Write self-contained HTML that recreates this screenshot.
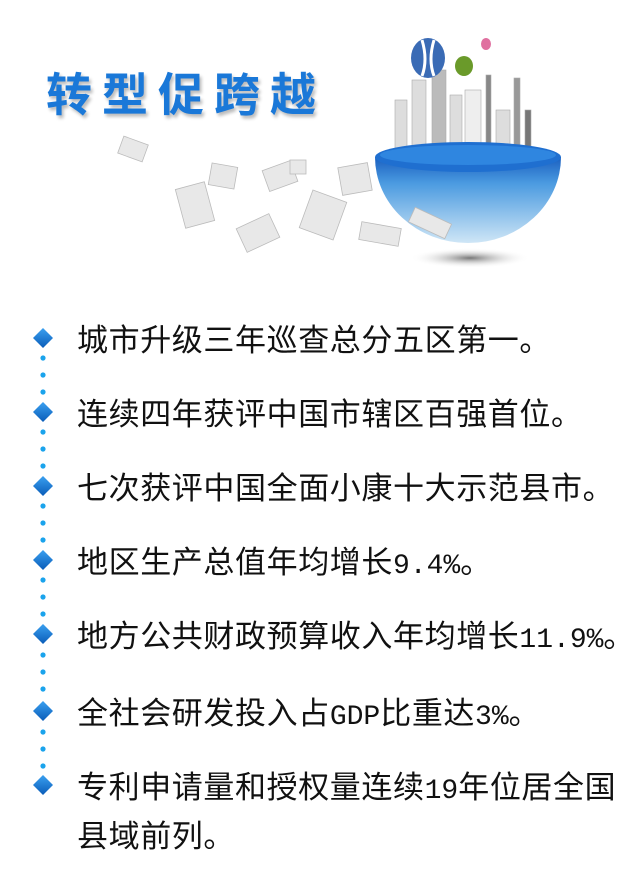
<!DOCTYPE html>
<html><head><meta charset="utf-8"><style>
html,body{margin:0;padding:0;background:#fff;width:640px;height:893px;overflow:hidden;position:relative}
.t{position:absolute;left:46px;top:62px;font:bold 46px "Noto Sans CJK SC",sans-serif;color:#1a78d8;letter-spacing:10px;text-shadow:2px 3px 3px #bbb;line-height:60px}
.r{position:absolute;left:77px;font:31px "Noto Sans CJK SC",sans-serif;color:#111;line-height:42px;white-space:nowrap;letter-spacing:0.6px}
.r span{font-family:"Liberation Mono",monospace;font-size:28px;letter-spacing:0}
</style></head><body>
<div class="t">转型促跨越</div>
<svg width="640" height="893" style="position:absolute;left:0;top:0">
<defs>
<linearGradient id="g" x1="0" y1="0" x2="0" y2="1"><stop offset="0" stop-color="#1a5fc0"/><stop offset=".3" stop-color="#4a9ae0"/><stop offset="1" stop-color="#cfe6f6"/></linearGradient>
<linearGradient id="d" x1="0" y1="0" x2="0" y2="1"><stop offset="0" stop-color="#3aa0f0"/><stop offset="1" stop-color="#0a5cb8"/></linearGradient>
<radialGradient id="sh"><stop offset="0" stop-color="#777"/><stop offset="1" stop-color="#fff" stop-opacity="0"/></radialGradient>
</defs>
<ellipse cx="470" cy="258" rx="60" ry="10" fill="url(#sh)"/>
<g fill="#ddd" stroke="#aaa" stroke-width="0.6">
<rect x="395" y="100" width="12" height="55"/><rect x="412" y="80" width="14" height="75"/><rect x="432" y="70" width="14" height="85" fill="#bbb"/><rect x="450" y="95" width="12" height="60"/><rect x="465" y="90" width="16" height="65" fill="#eee"/><rect x="486" y="75" width="5" height="80" fill="#888"/><rect x="496" y="110" width="14" height="45"/><rect x="514" y="78" width="6" height="77" fill="#999"/><rect x="525" y="110" width="6" height="45" fill="#777"/>
</g>
<path d="M375 157 A93 86 0 0 0 561 157 Z" fill="url(#g)"/>
<ellipse cx="468" cy="157" rx="93" ry="15" fill="#1f6fd0"/>
<ellipse cx="468" cy="155" rx="88" ry="10" fill="#2f86e0"/>
<ellipse cx="428" cy="58" rx="17" ry="20" fill="#3a6bb5"/><path d="M422 40 Q428 60 422 76 M434 40 Q428 60 434 76" stroke="#fff" stroke-width="3" fill="none"/>
<ellipse cx="464" cy="66" rx="9" ry="10" fill="#6a9a2a"/>
<ellipse cx="486" cy="44" rx="5" ry="6" fill="#e070a0"/>
<g fill="#e8e8e8" stroke="#bbb" stroke-width="0.8">
<rect x="120" y="140" width="26" height="18" transform="rotate(20 133 149)"/>
<rect x="180" y="185" width="30" height="40" transform="rotate(-15 195 205)"/>
<rect x="210" y="165" width="26" height="22" transform="rotate(10 223 176)"/>
<rect x="265" y="165" width="30" height="22" transform="rotate(-20 280 176)"/>
<rect x="240" y="220" width="36" height="26" transform="rotate(-25 258 233)"/>
<rect x="305" y="195" width="36" height="40" transform="rotate(20 323 215)"/>
<rect x="340" y="165" width="30" height="28" transform="rotate(-10 355 179)"/>
<rect x="360" y="225" width="40" height="18" transform="rotate(10 380 234)"/>
<rect x="410" y="215" width="40" height="16" transform="rotate(25 430 223)"/>
<rect x="290" y="160" width="16" height="14"/>
</g>
<g fill="#1aa3ec">
<circle cx="43" cy="358" r="2.6"/><circle cx="43" cy="375" r="2.6"/><circle cx="43" cy="392" r="2.6"/>
<circle cx="43" cy="432" r="2.6"/><circle cx="43" cy="449" r="2.6"/><circle cx="43" cy="466" r="2.6"/>
<circle cx="43" cy="506" r="2.6"/><circle cx="43" cy="523" r="2.6"/><circle cx="43" cy="540" r="2.6"/>
<circle cx="43" cy="580" r="2.6"/><circle cx="43" cy="597" r="2.6"/><circle cx="43" cy="614" r="2.6"/>
<circle cx="43" cy="655" r="2.6"/><circle cx="43" cy="672" r="2.6"/><circle cx="43" cy="689" r="2.6"/>
<circle cx="43" cy="732" r="2.6"/><circle cx="43" cy="749" r="2.6"/><circle cx="43" cy="766" r="2.6"/>
</g>
<g fill="url(#d)">
<path d="M43 328 L53 338 L43 348 L33 338Z"/><path d="M43 402 L53 412 L43 422 L33 412Z"/>
<path d="M43 476 L53 486 L43 496 L33 486Z"/><path d="M43 550 L53 560 L43 570 L33 560Z"/>
<path d="M43 624 L53 634 L43 644 L33 634Z"/><path d="M43 701 L53 711 L43 721 L33 711Z"/>
<path d="M43 775 L53 785 L43 795 L33 785Z"/>
</g>
</svg>
<div class="r" style="top:317px">城市升级三年巡查总分五区第一。</div>
<div class="r" style="top:391px">连续四年获评中国市辖区百强首位。</div>
<div class="r" style="top:465px">七次获评中国全面小康十大示范县市。</div>
<div class="r" style="top:539px">地区生产总值年均增长<span>9.4%</span>。</div>
<div class="r" style="top:613px">地方公共财政预算收入年均增长<span>11.9%</span>。</div>
<div class="r" style="top:690px">全社会研发投入占<span>GDP</span>比重达<span>3%</span>。</div>
<div class="r" style="top:764px">专利申请量和授权量连续<span>19</span>年位居全国<br>县域前列。</div>
</body></html>
